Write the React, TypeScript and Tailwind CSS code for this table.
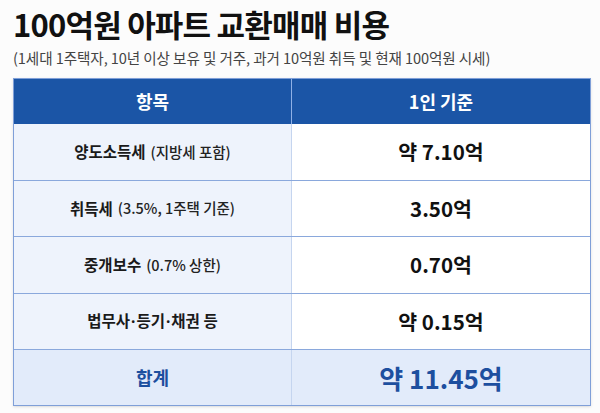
const font = { fontFamily: '"Noto Sans CJK KR", "Noto Sans", sans-serif' };

type Row = {
  label: string;
  note?: string;
  value: string;
};

const rows: Row[] = [
  { label: "양도소득세", note: "(지방세 포함)", value: "약 7.10억" },
  { label: "취득세", note: "(3.5%, 1주택 기준)", value: "3.50억" },
  { label: "중개보수", note: "(0.7% 상한)", value: "0.70억" },
  { label: "법무사·등기·채권 등", value: "약 0.15억" },
];

// middle dots look tighter in a latin face
function Label({ text }: { text: string }) {
  const parts = text.split("·");
  return (
    <>
      {parts.map((p, i) => (
        <span key={i}>
          {i > 0 && (
            <span className="font-['Noto_Sans'] px-[1px]">·</span>
          )}
          {p}
        </span>
      ))}
    </>
  );
}

export default function App() {
  return (
    <div
      className="w-[600px] h-[413px] bg-[#fcfcfc] text-[#111] overflow-hidden"
      style={font}
    >
      {/* title */}
      <div className="px-[13px] pt-[3px]">
        <h1 className="text-[31px] font-bold leading-[42px] tracking-[-0.8px]">
          100억원 아파트 교환매매 비용
        </h1>
        <p className="mt-[3px] text-[14.6px] leading-[20px] text-[#444] tracking-[-0.1px]">
          (1세대 1주택자, 10년 이상 보유 및 거주, 과거 10억원 취득 및 현재 100억원 시세)
        </p>
      </div>

      {/* table */}
      <div className="mx-[13px] mt-[10px] w-[578px] border border-[#7f9fd8] shadow-sm">
        <div className="grid grid-cols-[278px_1fr] h-[45px] bg-[#1b55a6] text-white font-bold text-[18px]">
          <div className="flex items-center justify-center border-r border-[#8fb0e6]">
            항목
          </div>
          <div className="flex items-center justify-center">1인 기준</div>
        </div>
        {rows.map((r) => (
          <div
            key={r.label}
            className="grid grid-cols-[278px_1fr] h-[56.5px] border-b border-[#8aa8dc]"
          >
            <div className="flex items-center justify-center gap-[5px] bg-[#eef3fc] border-r border-[#c5d5ef]">
              <span className="text-[15.5px] font-bold text-[#1a1a1a]">
                <Label text={r.label} />
              </span>
              {r.note && (
                <span className="text-[14.5px] font-medium text-[#222]">
                  {r.note}
                </span>
              )}
            </div>
            <div className="flex items-center justify-center bg-white text-[20.5px] font-bold text-[#111]">
              {r.value}
            </div>
          </div>
        ))}
        <div className="grid grid-cols-[278px_1fr] h-[55px] bg-[#e2ebfa] text-[#1d4f9f] font-bold">
          <div className="flex items-center justify-center border-r border-[#c5d5ef] text-[18px]">
            합계
          </div>
          <div className="flex items-center justify-center text-[26px]">
            약 11.45억
          </div>
        </div>
      </div>
    </div>
  );
}
